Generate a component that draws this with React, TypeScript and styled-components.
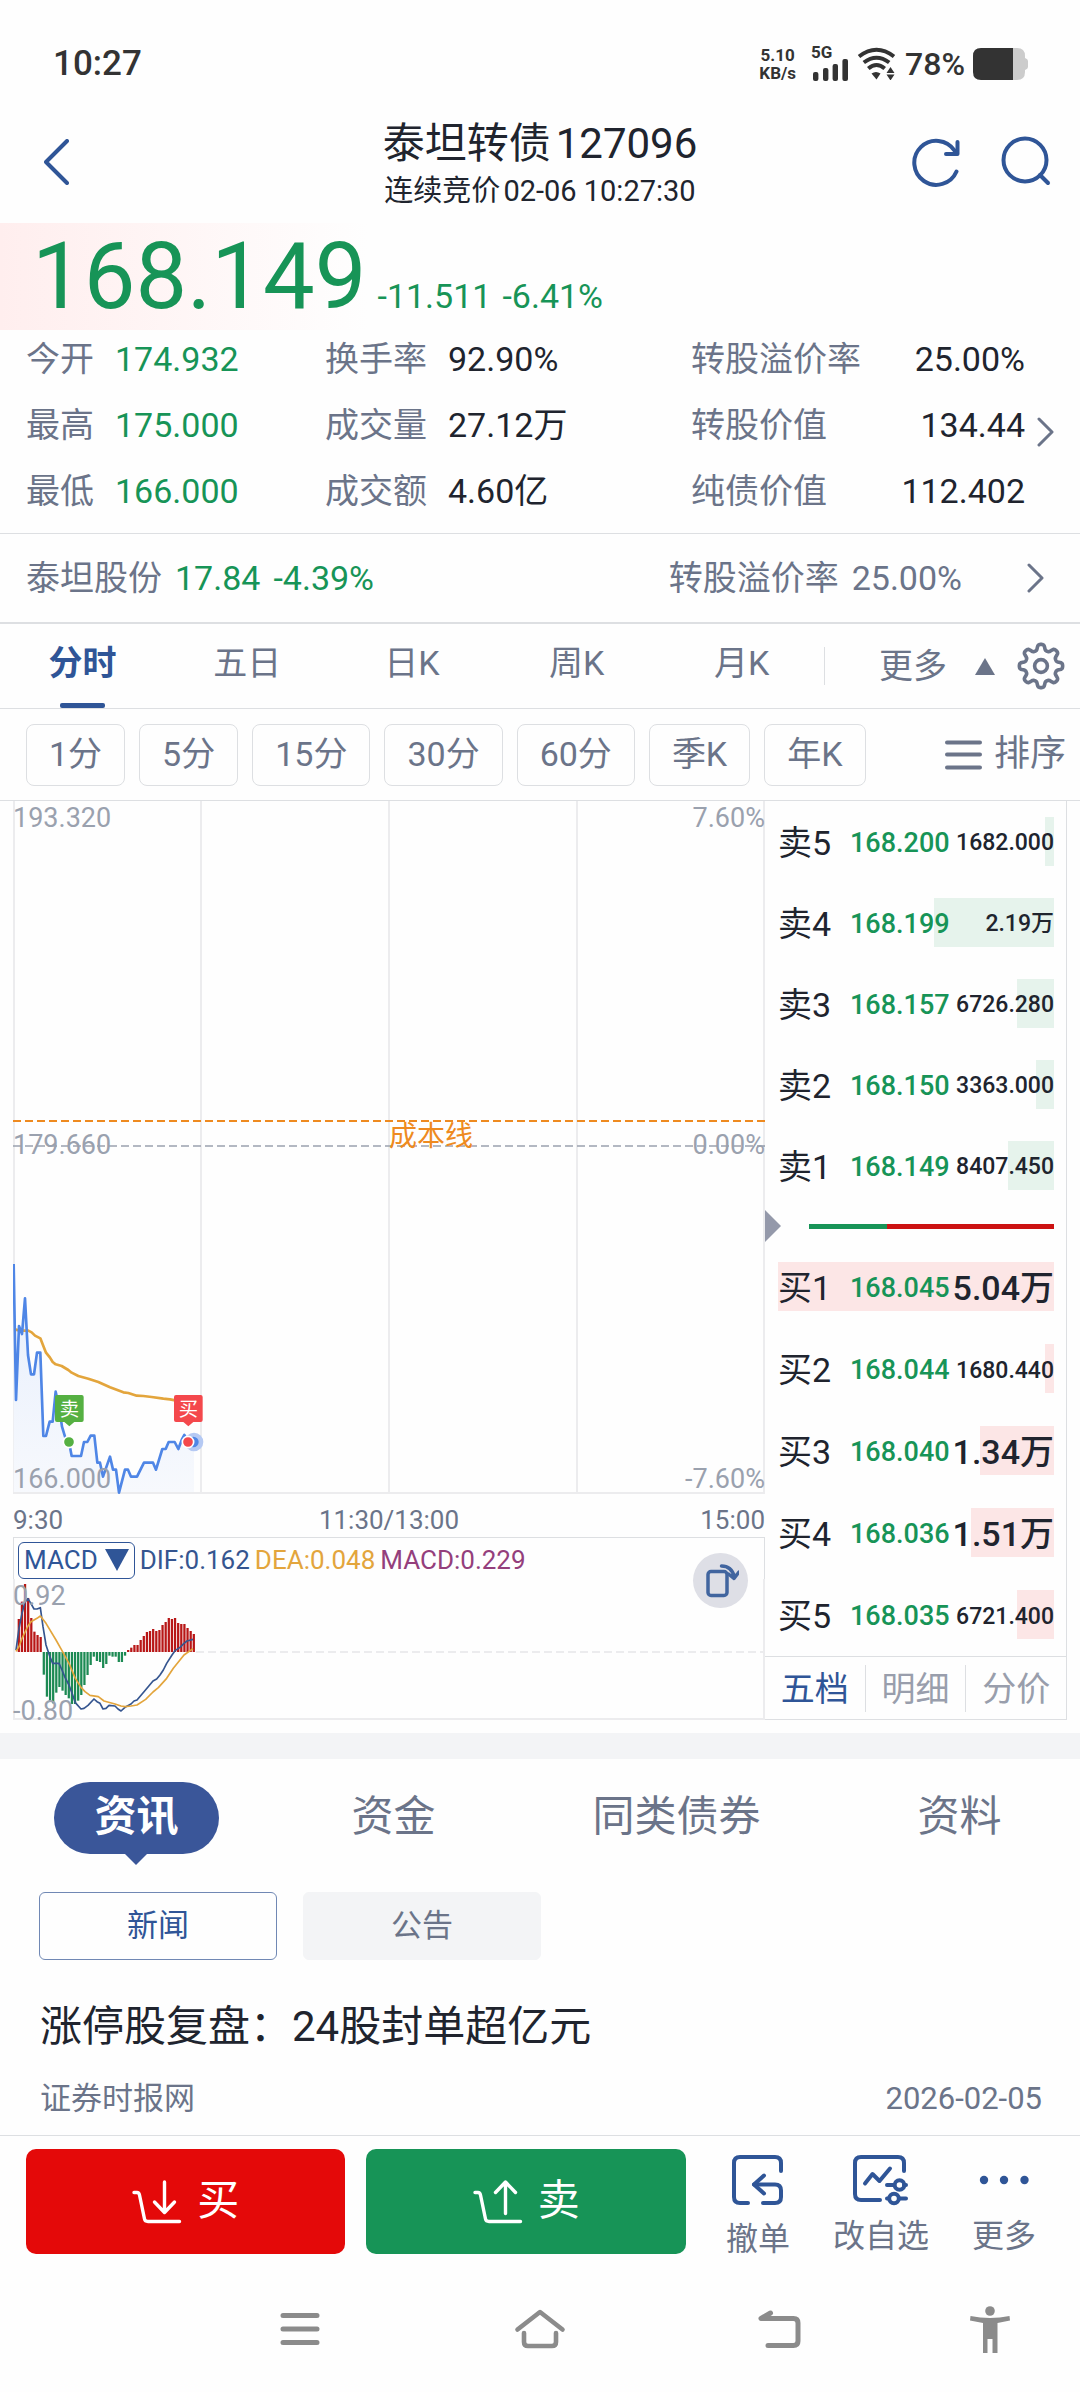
import React from "react";
import styled, { createGlobalStyle, css } from "styled-components";

const color = {
  page: "#fefefe",
  ink: "#20242e",
  muted: "#6b7489",
  faint: "#9aa1ae",
  line: "#dddfe2",
  grid: "#ececee",
  blue: "#2f5597",
  pill: "#3a5699",
  green: "#179457",
  red: "#e40909",
  amber: "#e3a53c",
  orange: "#ee8a20",
  price: "#4f86e6",
  panel: "#f3f4f6",
};

const GlobalStyle = createGlobalStyle`
  * { box-sizing: border-box; }
  body {
    margin: 0;
    background: ${color.page};
    color: ${color.ink};
    font-family: Roboto, "Noto Sans CJK SC", sans-serif;
    line-height: 1.2;
  }
  button { font: inherit; color: inherit; background: none; border: 0; padding: 0; margin: 0; cursor: pointer; }
  a { color: inherit; text-decoration: none; }
  h1, h2, p, dl, dd, dt { margin: 0; font-weight: 400; }
  svg { display: block; flex: none; }
`;

const Screen = styled.div`
  display: flex;
  flex-direction: column;
`;

/* ---------- status bar ---------- */

const StatusBar = styled.div`
  display: flex;
  align-items: center;
  justify-content: space-between;
  height: 100px;
  padding: 28px 51px 0 53px;
  color: #333;
`;

const Clock = styled.span`
  font-size: 35px;
  font-weight: 500;
`;

const StatusItems = styled.div`
  display: flex;
  align-items: center;
  font-weight: 500;
`;

const NetSpeed = styled.span`
  display: flex;
  flex-direction: column;
  align-items: center;
  font-size: 17px;
  font-weight: 700;
  line-height: 18px;
  margin-right: 15px;
`;

const Signal = styled.span`
  display: flex;
  flex-direction: column;
  font-size: 17px;
  line-height: 12px;
  font-weight: 700;
  margin-right: 8px;
`;

const BatteryLevel = styled.span`
  font-size: 32px;
  margin: 0 8px;
`;

/* ---------- header ---------- */

const Header = styled.header`
  display: grid;
  grid-template-columns: 1fr auto 1fr;
  align-items: center;
  height: 123px;
  padding: 0 28px;
`;

const BackButton = styled.button`
  padding-left: 16px;
`;

const HeaderTitle = styled.div`
  padding-top: 6px;
  text-align: center;
`;

const Title = styled.h1`
  display: flex;
  justify-content: center;
  gap: 5px;
  font-size: 42px;
  line-height: 52px;
`;

const Subtitle = styled.p`
  display: flex;
  justify-content: center;
  gap: 3px;
  font-size: 29px;
  line-height: 42px;
`;

const HeaderActions = styled.div`
  display: flex;
  justify-content: flex-end;
  align-items: center;
  gap: 38px;
`;

/* ---------- quote ---------- */

const PriceBanner = styled.div`
  display: flex;
  align-items: baseline;
  gap: 11px;
  padding-left: 32px;
  height: 107px;
  line-height: 107px;
  color: ${color.green};
  font-size: 34px;
  background: linear-gradient(90deg, #ffeeee, ${color.page} 34%);
`;

const LastPrice = styled.strong`
  font-size: 92px;
  font-weight: 400;
`;

const StatsPanel = styled.section`
  display: flex;
  border-bottom: 1px solid ${color.line};
  padding-left: 26px;
`;

const StatsGrid = styled.dl`
  flex: 1;
  display: grid;
  grid-template-columns: 299fr 366fr 334fr;
  row-gap: 8px;
  padding-bottom: 13px;
`;

const Stat = styled.div<{ $spread?: boolean }>`
  display: flex;
  gap: 21px;
  font-size: 34px;
  line-height: 58px;
  justify-content: ${(p) => (p.$spread ? "space-between" : "flex-start")};
`;

const StatLabel = styled.dt`
  color: ${color.muted};
`;

const StatValue = styled.dd<{ $down?: boolean }>`
  color: ${(p) => (p.$down ? color.green : color.ink)};
`;

const StatsMore = styled.button`
  width: 55px;
  display: flex;
  align-items: center;
  padding-left: 12px;
`;

const StockLink = styled.a`
  display: flex;
  align-items: center;
  gap: 13px;
  height: 90px;
  padding: 0 36px 0 26px;
  border-bottom: 2px solid ${color.line};
  font-size: 34px;
  color: ${color.muted};
`;

const Down = styled.span`
  color: ${color.green};
`;

const Spacer = styled.span`
  flex: 1;
`;

const LinkArrow = styled.span`
  padding-left: 52px;
`;

/* ---------- period tabs ---------- */

const TabBar = styled.div`
  display: flex;
  align-items: center;
  height: 85px;
  border-bottom: 1px solid ${color.line};
  padding-right: 15px;
`;

const TabList = styled.div`
  flex: 1;
  display: flex;
  align-self: stretch;
`;

const Tab = styled.button<{ $active?: boolean }>`
  position: relative;
  flex: 1;
  padding-bottom: 5px;
  font-size: 34px;
  color: ${color.muted};
  ${(p) =>
    p.$active &&
    css`
      color: ${color.blue};
      font-weight: 700;
      &::after {
        content: "";
        position: absolute;
        left: 50%;
        bottom: 0;
        width: 45px;
        height: 5px;
        margin-left: -22px;
        border-radius: 2px;
        background: ${color.blue};
      }
    `}
`;

const MoreTab = styled.button`
  display: flex;
  align-items: center;
  gap: 28px;
  height: 38px;
  padding-left: 54px;
  margin-right: 22px;
  border-left: 1px solid ${color.line};
  font-size: 34px;
  color: ${color.muted};
`;

const PeriodRow = styled.div`
  display: flex;
  align-items: center;
  gap: 14px;
  height: 91px;
  padding: 0 14px 0 26px;
`;

const Chip = styled.button`
  height: 62px;
  padding: 0 22px;
  border: 1px solid ${color.line};
  border-radius: 8px;
  font-size: 34px;
  color: ${color.muted};
`;

const SortButton = styled.button`
  display: flex;
  align-items: center;
  gap: 12px;
  margin-left: auto;
  font-size: 36px;
  color: ${color.muted};
`;

/* ---------- market: chart and order book ---------- */

const Market = styled.section`
  display: flex;
  border-top: 1px solid ${color.line};
  padding: 0 13px;
`;

const ChartColumn = styled.div`
  flex: 1;
  min-width: 0;
`;

const Plot = styled.div`
  position: relative;
`;

const PlotSvg = styled.svg`
  width: 100%;
  height: auto;
`;

const labelPlace = {
  top: "top: 2px;",
  middle: "top: 329px;",
  bottom: "bottom: 0;",
  below: "bottom: -6px;",
};

const AxisLabel = styled.span<{ $side: "left" | "right"; $at: keyof typeof labelPlace }>`
  position: absolute;
  font-size: 27px;
  line-height: 30px;
  color: ${color.faint};
  ${(p) => (p.$side === "left" ? "left: 0;" : "right: 0;")}
  ${(p) => labelPlace[p.$at]}
`;

const CostLabel = styled.span`
  position: absolute;
  left: 50%;
  top: 319px;
  font-size: 28px;
  line-height: 34px;
  color: ${color.orange};
`;

const TimeAxis = styled.div`
  display: grid;
  grid-template-columns: 1fr auto 1fr;
  height: 43px;
  padding-top: 5px;
  font-size: 26px;
  line-height: 43px;
  color: ${color.muted};
`;

const LastTime = styled.span`
  text-align: right;
`;

const Indicator = styled.div`
  border-top: 1px solid ${color.line};
`;

const IndicatorHead = styled.div`
  display: flex;
  align-items: center;
  gap: 5px;
  height: 41px;
  padding: 3px 0 0 4px;
  border-left: 1px solid ${color.line};
  border-right: 1px solid ${color.line};
  font-size: 26px;
  line-height: 36px;
`;

const IndicatorPick = styled.button`
  display: flex;
  align-items: center;
  gap: 7px;
  height: 37px;
  padding: 0 5px;
  border: 1px solid ${color.blue};
  border-radius: 6px;
  color: ${color.blue};
`;

const Reading = styled.span<{ $tone: string }>`
  color: ${(p) => p.$tone};
`;

const RotateButton = styled.button`
  position: absolute;
  right: 17px;
  top: -26px;
  width: 55px;
  height: 55px;
  border-radius: 50%;
  background: #dedfe6;
  display: grid;
  place-items: center;
`;

const Book = styled.div`
  width: 302px;
  border-right: 1px solid ${color.line};
  border-bottom: 1px solid ${color.line};
`;

const BookRow = styled.div<{ $tall?: boolean }>`
  position: relative;
  display: grid;
  grid-template-columns: 72px 98px 1fr;
  align-items: center;
  height: ${(p) => (p.$tall ? 82 : 81)}px;
  margin: 0 12px 0 13px;
  padding-top: 3px;
`;

const Depth = styled.span<{ $buy?: boolean }>`
  position: absolute;
  right: 0;
  top: 16px;
  height: 49px;
  background: ${(p) => (p.$buy ? "#fce6e6" : "#e6f3ec")};
`;

const BookSide = styled.span`
  position: relative;
  font-size: 34px;
`;

const BookPrice = styled.span`
  position: relative;
  font-size: 27px;
  font-weight: 500;
  color: ${color.green};
`;

const BookVolume = styled.span<{ $large?: boolean }>`
  position: relative;
  text-align: right;
  white-space: nowrap;
  margin-left: -6px;
  font-size: ${(p) => (p.$large ? 34 : 23)}px;
  font-weight: 500;
`;

const BalanceRow = styled.div`
  display: flex;
  align-items: center;
  gap: 28px;
  height: 40px;
  padding-right: 12px;
`;

const Balance = styled.div`
  flex: 1;
  height: 5px;
  background: linear-gradient(90deg, ${color.green} 32%, #cc1212 32%);
`;

const BookTabs = styled.div`
  display: flex;
  align-items: center;
  height: 63px;
  border-top: 1px solid ${color.line};
`;

const BookTab = styled.button<{ $active?: boolean }>`
  flex: 1;
  height: 47px;
  padding-top: 2px;
  font-size: 34px;
  color: ${(p) => (p.$active ? color.blue : "#999eac")};
  & + & {
    border-left: 1px solid ${color.line};
  }
`;

/* ---------- news ---------- */

const Divider = styled.div`
  height: 26px;
  margin-top: 13px;
  background: ${color.panel};
`;

const SectionTabs = styled.div`
  display: flex;
  justify-content: space-around;
  padding: 23px 0 38px;
`;

const SectionTab = styled.button<{ $active?: boolean }>`
  position: relative;
  height: 72px;
  padding: 0 24px 2px;
  font-size: 42px;
  color: ${color.muted};
  ${(p) =>
    p.$active &&
    css`
      padding: 0 40px 2px;
      border-radius: 36px;
      background: ${color.pill};
      color: #fff;
      font-weight: 700;
      &::after {
        content: "";
        position: absolute;
        left: 50%;
        top: 100%;
        margin-left: -11px;
        border: 11px solid transparent;
        border-top-color: ${color.pill};
        border-bottom: 0;
      }
    `}
`;

const FilterRow = styled.div`
  display: flex;
  gap: 26px;
  padding: 0 39px;
`;

const Filter = styled.button<{ $active?: boolean }>`
  width: 238px;
  height: 68px;
  border-radius: 6px;
  border: 1px solid ${(p) => (p.$active ? "#7088b4" : color.panel)};
  background: ${(p) => (p.$active ? "transparent" : color.panel)};
  color: ${(p) => (p.$active ? color.blue : color.muted)};
  font-size: 31px;
`;

const Article = styled.a`
  display: block;
  padding: 37px 38px 14px 40px;
`;

const Headline = styled.h2`
  font-size: 42px;
  line-height: 60px;
`;

const ArticleMeta = styled.p`
  display: flex;
  justify-content: space-between;
  margin-top: 20px;
  font-size: 31px;
  line-height: 44px;
  color: ${color.muted};
`;

/* ---------- bottom actions ---------- */

const ActionBar = styled.div`
  display: flex;
  align-items: flex-start;
  border-top: 1px solid ${color.line};
  padding: 13px 44px 0 26px;
`;

const TradeButtons = styled.div`
  flex: 1;
  display: flex;
  gap: 21px;
`;

const TradeButton = styled.button<{ $tone: string }>`
  flex: 1;
  display: flex;
  align-items: center;
  justify-content: center;
  gap: 15px;
  height: 105px;
  border-radius: 10px;
  background: ${(p) => p.$tone};
  color: #fff;
  font-size: 42px;
`;

const QuickActions = styled.div`
  display: flex;
  gap: 43px;
  padding: 6px 0 0 40px;
`;

const QuickAction = styled.button`
  display: flex;
  flex-direction: column;
  align-items: center;
  align-self: flex-start;
  gap: 8px;
  font-size: 32px;
  line-height: 42px;
  color: ${color.muted};
`;

const NavBar = styled.nav`
  display: grid;
  grid-template-columns: 4fr 4fr 4fr 3fr;
  place-items: center;
  height: 138px;
  padding: 0 0 0 180px;
`;

/* ---------- icons ---------- */

const Chevron = ({ dir, w, h, tone, weight }: { dir: "left" | "right"; w: number; h: number; tone: string; weight: number }) => (
  <svg width={w + 4} height={h + 4} viewBox={`-2 -2 ${w + 4} ${h + 4}`} fill="none" stroke={tone} strokeWidth={weight} strokeLinecap="round" strokeLinejoin="round">
    <path d={dir === "left" ? `M${w} 0 0 ${h / 2} ${w} ${h}` : `M0 0 ${w} ${h / 2} 0 ${h}`} />
  </svg>
);

const RefreshIcon = () => (
  <svg width="52" height="52" viewBox="0 0 52 52" fill="none" stroke={color.blue} strokeWidth="4" strokeLinejoin="round">
    <path d="M46.5 35.5A22 22 0 1 1 44.6 14.6" strokeLinecap="round" />
    <path d="M47.5 6v12H36" strokeLinecap="round" />
  </svg>
);

const SearchIcon = () => (
  <svg width="52" height="52" viewBox="0 0 52 52" fill="none" stroke={color.blue} strokeWidth="4" strokeLinecap="round">
    <circle cx="25" cy="24" r="21.5" />
    <path d="m40 39 8 8" />
  </svg>
);

const gearPath = (() => {
  const pts: string[] = [];
  for (let i = 0; i < 240; i++) {
    const a = (i / 240) * Math.PI * 2;
    const r = 18.8 + 3 * Math.tanh(1.8 * Math.cos(8 * a));
    pts.push(`${(24 + r * Math.sin(a)).toFixed(2)} ${(24 - r * Math.cos(a)).toFixed(2)}`);
  }
  return `M${pts.join("L")}Z`;
})();

const GearIcon = () => (
  <svg width="48" height="48" viewBox="0 0 48 48" fill="none" stroke={color.muted} strokeWidth="3.6" strokeLinejoin="round">
    <path d={gearPath} />
    <circle cx="24" cy="24" r="6.4" />
  </svg>
);

const SignalBars = () => (
  <svg width="38" height="23" viewBox="0 0 38 23" fill="#333">
    <rect x="2" y="14" width="5.4" height="9" rx="2" />
    <rect x="12" y="10" width="5.4" height="13" rx="2" />
    <rect x="21.6" y="6" width="5.4" height="17" rx="2" />
    <rect x="31.4" y="1" width="5.6" height="22" rx="2" />
  </svg>
);

const WifiIcon = () => (
  <svg width="40" height="33" viewBox="0 0 40 33">
    <g fill="none" stroke="#333" strokeWidth="4">
      <path d="M2 9.5Q19.500-4 37 9.500" />
      <path d="M6.800 15.500Q19.500 6 32.200 15.500" />
      <path d="M11.300 21.500Q19.500 14.500 27.700 21.500" />
    </g>
    <path d="M14.500 26.500q4.500-3 9 0L19.500 32.500z" fill="#333" />
    <path d="M33.500 20l4 6h-8zM33.500 33.500l-4-6h8z" fill="#333" />
  </svg>
);

const BatteryIcon = () => (
  <svg width="56" height="32" viewBox="0 0 56 32">
    <path d="M38 0h6q8 0 8 8v2q3 1 3 3v6q0 2-3 3v2q0 8-8 8h-6z" fill="#ccc" />
    <path d="M8 0h32v32H8q-8 0-8-8V8q0-8 8-8z" fill="#333" />
  </svg>
);

const SortIcon = () => (
  <svg width="37" height="30" viewBox="0 0 37 30" stroke={color.muted} strokeWidth="4" strokeLinecap="round">
    <path d="M2 2.500h33M2 14.500h33M2 27.500h33" />
  </svg>
);

const BasketIcon = ({ up }: { up?: boolean }) => (
  <svg width="50" height="44" viewBox="0 0 50 44" fill="none" stroke="#fff" strokeWidth="3.400" strokeLinecap="round" strokeLinejoin="round">
    <path d="M2 12.500h3q2 0 2.500 2.500l5 24q.5 2.500 3.500 2.500h31.500" />
    {up ? <path d="M32.500 33.500V2.500M22.500 12.500l10-10.500 10 10.500" /> : <path d="M32.500 2v30M22.500 22l10 10.500L42.500 22" />}
  </svg>
);

const CancelIcon = () => (
  <svg width="52" height="55" viewBox="0 0 52 55" fill="none" stroke={color.blue} strokeWidth="4" strokeLinecap="round" strokeLinejoin="round">
    <path d="M49 16V8q0-6-6-6H8Q2 2 2 8v34q0 6 6 6h8" />
    <path d="M31 48h12q6 0 6-6V35.500q0-6-6-6H22" />
    <path d="M32 20.500 22 29.500l10 9" />
  </svg>
);

const WatchlistIcon = () => (
  <svg width="56" height="52" viewBox="0 0 56 52" fill="none" stroke={color.blue} strokeWidth="4" strokeLinecap="round" strokeLinejoin="round">
    <path d="M51 16V8q0-6-6-6H8Q2 2 2 8v31q0 6 6 6h19" />
    <path d="M12 28.500 19.500 19l7 7L37 13.500" />
    <path d="M34 30h6.500M51 30h2M34 43.500h1.500M47 43.500h6" />
    <circle cx="46.500" cy="30" r="4.800" />
    <circle cx="41" cy="43.500" r="4.800" />
  </svg>
);

const DotsIcon = () => (
  <svg width="52" height="52" viewBox="0 0 52 52" fill={color.blue}>
    <circle cx="6" cy="25" r="4.200" />
    <circle cx="26" cy="25" r="4.200" />
    <circle cx="46.500" cy="25" r="4.200" />
  </svg>
);

const RotateIcon = () => (
  <svg width="36" height="36" viewBox="0 0 36 36" fill="none" stroke="#41659f" strokeWidth="3.500" strokeLinecap="round" strokeLinejoin="round">
    <rect x="5" y="8.500" width="19" height="24" rx="3" />
    <path d="M18.500 3q10 0 13 11M25.500 11l5.500 4.500 5-6.500" />
  </svg>
);

/* ---------- chart data, in thirds of a pixel ---------- */

const priceLine =
  "41,72 48,480 57,258 66,282 75,175 84,345 93,403 102,403 111,338 121,338 130,588 138,588 149,545 158,545 167,455 177,500 186,560 195,590 207,606 215,648 243,648 252,606 262,606 272,587 283,587 292,668 300,668 309,710 330,650 339,689 348,689 357,758 375,689 384,689 393,710 411,710 432,668 459,668 468,689 487,627 497,627 506,606 524,606 535,627 545,600 553,585 565,606 582,606";

const averageLine =
  "44,268 60,272 85,272 95,277 105,287 121,295 130,318 138,338 150,353 158,366 167,373 185,378 205,390 215,398 235,408 265,416 295,426 330,442 370,457 385,459 410,467 430,468 455,471 490,476 510,478 530,482";

const histogram = [
  387, 335, 282, 324, 384, 425, 435, 441, 554, 620, 634, 640, 608, 591, 602, 615, 625, 642, 642, 632, 615, 585, 555,
  525, 500, 513, 516, 534, 522, 497, 500, 500, 516, 516, 497, 480, 473, 465, 465, 450, 438, 426, 423, 417, 423, 420,
  405, 396, 384, 387, 384, 399, 402, 402, 414, 423, 432,
];

const difLine =
  "48,480 57,415 66,370 75,336 84,326 93,341 102,357 111,357 121,353 129,410 138,465 149,498 158,520 177,520 186,540 195,562 207,585 217,612 226,638 243,657 252,655 264,646 282,627 291,635 300,640 309,657 318,655 327,646 345,648 354,657 363,663 375,652 393,642 402,633 411,630 432,605 459,573 470,567 480,555 490,540 500,520 516,495 525,482 540,472 552,460 561,453 579,448";

const deaLine =
  "48,484 57,470 66,445 84,408 93,395 111,385 121,378 138,400 168,450 186,482 207,520 226,565 243,592 255,605 270,616 295,620 312,633 345,642 363,648 375,650 393,648 411,645 437,628 459,606 475,593 500,565 520,535 552,495 579,476";

const ZERO = 486;

const Marker = ({ x, tone, label }: { x: number; tone: string; label: string }) => (
  <g>
    <path d={`M${x - 37} 465h74q6 0 6 6v69q0 6-6 6h-22l-15 13-15-13h-22q-6 0-6-6v-69q0-6 6-6z`} fill={tone} />
    <text x={x} y="529" fill="#fff" fontSize="58" textAnchor="middle">{label}</text>
    <circle cx={x - 1} cy="606" r="17" fill={tone} stroke="#fff" strokeWidth="5" />
  </g>
);

const PriceChart = () => (
  <Plot>
    <PlotSvg viewBox="39 -1317 2256 2079" role="img" aria-label="分时走势">
      <defs>
        <linearGradient id="area" x1="0" y1="0" x2="0" y2="1">
          <stop offset="0" stopColor="#e6eefc" />
          <stop offset="1" stopColor="#f7f9fd" />
        </linearGradient>
      </defs>
      <g stroke={color.grid} strokeWidth="6">
        <path d="M42-1317V759M603-1317V759M1167-1317V759M1731-1317V759M2292-1317V759M39 759H2295" />
      </g>
      <polygon points={`41,756 ${priceLine} 582,756`} fill="url(#area)" />
      <path d="M39-357H2295" stroke={color.orange} strokeWidth="6" strokeDasharray="24 12" />
      <path d="M39-282H2295" stroke={color.faint} strokeWidth="5" strokeDasharray="24 12" />
      <g fill="none" strokeWidth="8" strokeLinejoin="round">
        <polyline points={averageLine} stroke={color.amber} />
        <polyline points={priceLine} stroke={color.price} />
      </g>
      <circle cx="582" cy="606" r="28" fill="#b5c9f3" />
      <circle cx="580" cy="606" r="16" fill={color.price} />
      <Marker x={208} tone="#55b042" label="卖" />
      <Marker x={565} tone="#f4484c" label="买" />
    </PlotSvg>
    <AxisLabel $side="left" $at="top">193.320</AxisLabel>
    <AxisLabel $side="right" $at="top">7.60%</AxisLabel>
    <AxisLabel $side="left" $at="middle">179.660</AxisLabel>
    <AxisLabel $side="right" $at="middle">0.00%</AxisLabel>
    <AxisLabel $side="left" $at="bottom">166.000</AxisLabel>
    <AxisLabel $side="right" $at="bottom">-7.60%</AxisLabel>
    <CostLabel>成本线</CostLabel>
  </Plot>
);

const MacdChart = () => (
  <Plot>
    <PlotSvg viewBox="39 267 2256 423" role="img" aria-label="MACD">
      <g stroke={color.grid} strokeWidth="6" fill="none">
        <path d="M42 267V687M2292 267V687M39 687H2295" />
        <path d={`M588 ${ZERO}H2295`} strokeDasharray="24 12" />
      </g>
      {histogram.map((v, i) => (
        <rect
          key={i}
          x={53 + i * 9.375}
          width="6.800"
          y={Math.min(v, ZERO)}
          height={Math.abs(v - ZERO)}
          fill={v < ZERO ? "#b81616" : "#1c8a53"}
        />
      ))}
      <g fill="none" strokeWidth="5" strokeLinejoin="round">
        <polyline points={difLine} stroke="#35558f" />
        <polyline points={deaLine} stroke={color.amber} />
      </g>
    </PlotSvg>
    <AxisLabel $side="left" $at="top">0.92</AxisLabel>
    <AxisLabel $side="left" $at="below">-0.80</AxisLabel>
    <RotateButton aria-label="横屏">
      <RotateIcon />
    </RotateButton>
  </Plot>
);

/* ---------- content ---------- */

type StatItem = { label: string; value: string; down?: boolean; spread?: boolean };

const stats: StatItem[] = [
  { label: "今开", value: "174.932", down: true },
  { label: "换手率", value: "92.90%" },
  { label: "转股溢价率", value: "25.00%", spread: true },
  { label: "最高", value: "175.000", down: true },
  { label: "成交量", value: "27.12万" },
  { label: "转股价值", value: "134.44", spread: true },
  { label: "最低", value: "166.000", down: true },
  { label: "成交额", value: "4.60亿" },
  { label: "纯债价值", value: "112.402", spread: true },
];

type Level = { side: string; price: string; volume: string; depth: number; large?: boolean };

const sells: Level[] = [
  { side: "卖5", price: "168.200", volume: "1682.000", depth: 9 },
  { side: "卖4", price: "168.199", volume: "2.19万", depth: 120 },
  { side: "卖3", price: "168.157", volume: "6726.280", depth: 37 },
  { side: "卖2", price: "168.150", volume: "3363.000", depth: 18 },
  { side: "卖1", price: "168.149", volume: "8407.450", depth: 46 },
];

const buys: Level[] = [
  { side: "买1", price: "168.045", volume: "5.04万", depth: 276, large: true },
  { side: "买2", price: "168.044", volume: "1680.440", depth: 9 },
  { side: "买3", price: "168.040", volume: "1.34万", depth: 74, large: true },
  { side: "买4", price: "168.036", volume: "1.51万", depth: 83, large: true },
  { side: "买5", price: "168.035", volume: "6721.400", depth: 37 },
];

const MAX_DEPTH = 276;

const BookLevel = ({ level, buy }: { level: Level; buy?: boolean }) => (
  <BookRow $tall={buy}>
    <Depth $buy={buy} style={{ width: `${(level.depth / MAX_DEPTH) * 100}%` }} />
    <BookSide>{level.side}</BookSide>
    <BookPrice>{level.price}</BookPrice>
    <BookVolume $large={level.large}>{level.volume}</BookVolume>
  </BookRow>
);

export default function App() {
  return (
    <Screen>
      <GlobalStyle />
      <StatusBar>
        <Clock>10:27</Clock>
        <StatusItems>
          <NetSpeed>
            <span>5.10</span>
            <span>KB/s</span>
          </NetSpeed>
          <Signal>
            5G
            <SignalBars />
          </Signal>
          <WifiIcon />
          <BatteryLevel>78%</BatteryLevel>
          <BatteryIcon />
        </StatusItems>
      </StatusBar>

      <Header>
        <BackButton aria-label="返回">
          <Chevron dir="left" w={21} h={42} tone={color.blue} weight={4} />
        </BackButton>
        <HeaderTitle>
          <Title>
            <span>泰坦转债</span>
            <span>127096</span>
          </Title>
          <Subtitle>
            <span>连续竞价</span>
            <span>02-06 10:27:30</span>
          </Subtitle>
        </HeaderTitle>
        <HeaderActions>
          <button aria-label="刷新">
            <RefreshIcon />
          </button>
          <button aria-label="搜索">
            <SearchIcon />
          </button>
        </HeaderActions>
      </Header>

      <PriceBanner>
        <LastPrice>168.149</LastPrice>
        <span>-11.511</span>
        <span>-6.41%</span>
      </PriceBanner>

      <StatsPanel>
        <StatsGrid>
          {stats.map((s) => (
            <Stat key={s.label} $spread={s.spread}>
              <StatLabel>{s.label}</StatLabel>
              <StatValue $down={s.down}>{s.value}</StatValue>
            </Stat>
          ))}
        </StatsGrid>
        <StatsMore aria-label="更多指标">
          <Chevron dir="right" w={13} h={26} tone={color.muted} weight={3} />
        </StatsMore>
      </StatsPanel>

      <StockLink href="#stock">
        <span>泰坦股份</span>
        <Down>17.84</Down>
        <Down>-4.39%</Down>
        <Spacer />
        <span>转股溢价率</span>
        <span>25.00%</span>
        <LinkArrow>
          <Chevron dir="right" w={13} h={26} tone={color.muted} weight={3} />
        </LinkArrow>
      </StockLink>

      <TabBar>
        <TabList role="tablist">
          {["分时", "五日", "日K", "周K", "月K"].map((t, i) => (
            <Tab key={t} role="tab" aria-selected={i === 0} $active={i === 0}>
              {t}
            </Tab>
          ))}
        </TabList>
        <MoreTab>
          更多
          <svg width="20" height="17" viewBox="0 0 20 17" fill={color.muted}>
            <path d="M10 0 20 17H0z" />
          </svg>
        </MoreTab>
        <button aria-label="设置">
          <GearIcon />
        </button>
      </TabBar>

      <PeriodRow>
        {["1分", "5分", "15分", "30分", "60分", "季K", "年K"].map((p) => (
          <Chip key={p}>{p}</Chip>
        ))}
        <SortButton>
          <SortIcon />
          排序
        </SortButton>
      </PeriodRow>

      <Market>
        <ChartColumn>
          <PriceChart />
          <TimeAxis>
            <span>9:30</span>
            <span>11:30/13:00</span>
            <LastTime>15:00</LastTime>
          </TimeAxis>
          <Indicator>
            <IndicatorHead>
              <IndicatorPick>
                MACD
                <svg width="24" height="22" viewBox="0 0 24 22" fill={color.blue}>
                  <path d="M0 0h24L12 22z" />
                </svg>
              </IndicatorPick>
              <Reading $tone="#35558f">DIF:0.162</Reading>
              <Reading $tone={color.amber}>DEA:0.048</Reading>
              <Reading $tone="#943f7c">MACD:0.229</Reading>
            </IndicatorHead>
            <MacdChart />
          </Indicator>
        </ChartColumn>

        <Book>
          {sells.map((l) => (
            <BookLevel key={l.side} level={l} />
          ))}
          <BalanceRow>
            <svg width="16" height="32" viewBox="0 0 16 32" fill="#9499aa">
              <path d="M0 0 16 16 0 32z" />
            </svg>
            <Balance />
          </BalanceRow>
          {buys.map((l) => (
            <BookLevel key={l.side} level={l} buy />
          ))}
          <BookTabs role="tablist">
            {["五档", "明细", "分价"].map((t, i) => (
              <BookTab key={t} role="tab" aria-selected={i === 0} $active={i === 0}>
                {t}
              </BookTab>
            ))}
          </BookTabs>
        </Book>
      </Market>

      <Divider />

      <SectionTabs role="tablist">
        {["资讯", "资金", "同类债券", "资料"].map((t, i) => (
          <SectionTab key={t} role="tab" aria-selected={i === 0} $active={i === 0}>
            {t}
          </SectionTab>
        ))}
      </SectionTabs>
      <FilterRow>
        <Filter $active>新闻</Filter>
        <Filter>公告</Filter>
      </FilterRow>
      <Article href="#news">
        <Headline>涨停股复盘：24股封单超亿元</Headline>
        <ArticleMeta>
          <span>证券时报网</span>
          <time>2026-02-05</time>
        </ArticleMeta>
      </Article>

      <ActionBar>
        <TradeButtons>
          <TradeButton $tone={color.red}>
            <BasketIcon />买
          </TradeButton>
          <TradeButton $tone={color.green}>
            <BasketIcon up />卖
          </TradeButton>
        </TradeButtons>
        <QuickActions>
          <QuickAction>
            <CancelIcon />
            撤单
          </QuickAction>
          <QuickAction>
            <WatchlistIcon />
            改自选
          </QuickAction>
          <QuickAction>
            <DotsIcon />
            更多
          </QuickAction>
        </QuickActions>
      </ActionBar>

      <NavBar>
        <button aria-label="任务">
          <svg width="40" height="34" viewBox="0 0 40 34" stroke="#8b8b8b" strokeWidth="5" strokeLinecap="round">
            <path d="M3 3.500h34M3 17h34M3 30.500h34" />
          </svg>
        </button>
        <button aria-label="主页">
          <svg width="52" height="40" viewBox="0 0 52 40" fill="none" stroke="#8b8b8b" strokeWidth="4.600" strokeLinecap="round" strokeLinejoin="round">
            <path d="M3.500 20.500 26 3l22.500 17.500" />
            <path d="M10 24v9q0 4 4 4h24q4 0 4-4v-9" />
          </svg>
        </button>
        <button aria-label="后退">
          <svg width="44" height="40" viewBox="0 0 44 40" fill="none" stroke="#8b8b8b" strokeWidth="5" strokeLinecap="round" strokeLinejoin="round">
            <path d="M12.500 4 3 9.500h32.500q4.500 0 4.500 4.500v18q0 4.500-4.500 4.500H10" />
          </svg>
        </button>
        <button aria-label="无障碍">
          <svg width="42" height="47" viewBox="0 0 42 47" fill="#8b8b8b">
            <circle cx="21" cy="5" r="4.800" />
            <path d="M1.500 10Q21 14 40.500 10l.500 4.500-12.500 2.500V47H23.500V33h-5V47H14V17L1 14.500z" />
          </svg>
        </button>
      </NavBar>
    </Screen>
  );
}
